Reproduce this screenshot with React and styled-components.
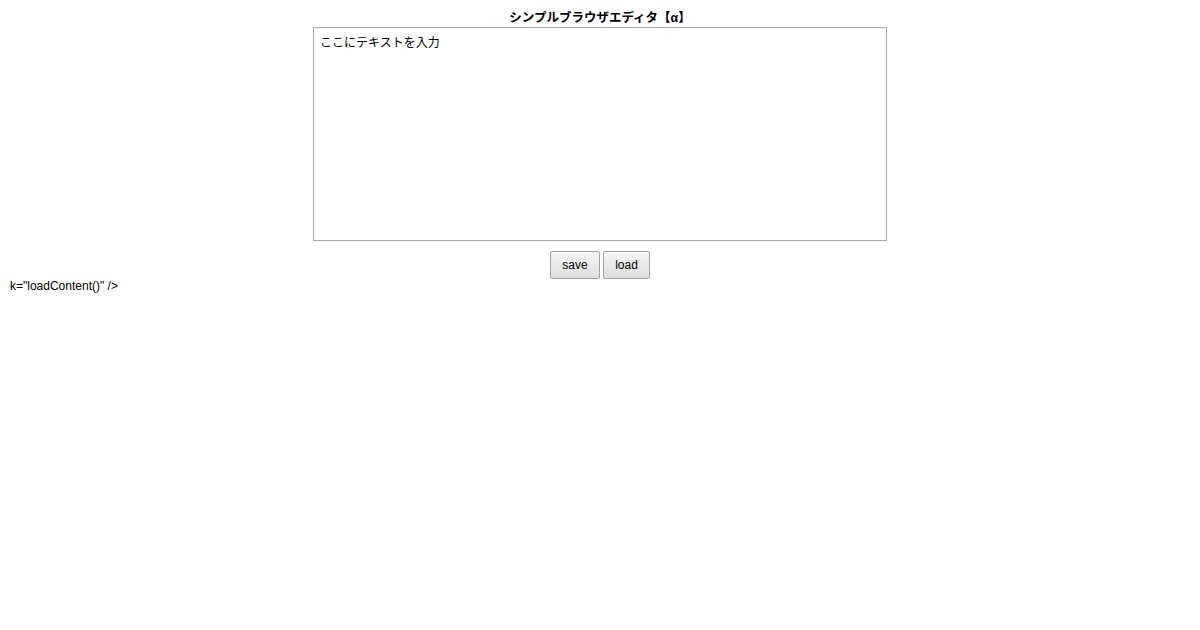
import React from "react"
import styled, { createGlobalStyle } from "styled-components"

const GlobalStyle = createGlobalStyle`
  body {
    margin: 0;
    padding: 10px;
    background: #fff;
    color: #000;
    font-family: "Liberation Sans", "Noto Sans CJK JP", sans-serif;
    font-size: 12px;
  }
`

const Page = styled.div`
  display: flex;
  flex-direction: column;
`

const Title = styled.h1`
  margin: 0;
  text-align: center;
  font-size: 12.5px;
  line-height: 17px;
  font-weight: bold;
  font-family: "Liberation Sans", "Noto Sans CJK JP", sans-serif;
`

const Editor = styled.textarea`
  display: block;
  box-sizing: border-box;
  width: 574px;
  height: 214px;
  margin: 0 auto;
  padding: 7px 6px 6px;
  border: 1px solid #a9a9a9;
  resize: none;
  font-family: "Liberation Sans", "Noto Sans CJK JP", sans-serif;
  font-size: 12px;
  line-height: 16px;
  color: #000;
  outline: none;
`

const Toolbar = styled.div`
  display: flex;
  justify-content: center;
  gap: 3px;
  margin-top: 10px;
`

const Button = styled.button`
  box-sizing: border-box;
  height: 28px;
  width: ${(p) => p.$w}px;
  padding: 0;
  border: 1px solid #a0a0a0;
  border-radius: 2px;
  background: linear-gradient(#f6f6f6, #dedede);
  font-family: "Liberation Sans", sans-serif;
  font-size: 12px;
  color: #000;
`

const Leftover = styled.div`
  font-size: 12px;
  line-height: 14px;
`

const App = () => (
  <>
    <GlobalStyle />
    <Page>
      <Title>シンプルブラウザエディタ【α】</Title>
      <Editor defaultValue="ここにテキストを入力" />
      <Toolbar>
        <Button $w={50}>save</Button>
        <Button $w={47}>load</Button>
      </Toolbar>
      <Leftover>k="loadContent()" /&gt;</Leftover>
    </Page>
  </>
)

export default App
